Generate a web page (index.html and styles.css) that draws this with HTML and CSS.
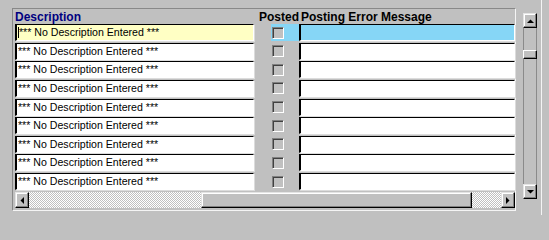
FILE: index.html
```html
<!DOCTYPE html>
<html>
<head>
<meta charset="utf-8">
<link rel="stylesheet" href="styles.css">
</head>
<body>
<div class="win">
  <div class="frame">
    <div class="hdr">
      <div class="h-desc">Description</div>
      <div class="h-posted">Posted</div>
      <div class="h-err">Posting Error Message</div>
    </div>
    <div class="rows">
      <div class="row cur">
        <div class="fld desc"><span class="caret"></span>*** No Description Entered ***</div>
        <div class="pcell"><div class="hl"><span class="chk"></span></div></div>
        <div class="fld err"></div>
      </div>
      <div class="row">
        <div class="fld desc">*** No Description Entered ***</div>
        <div class="pcell"><div class="hl"><span class="chk"></span></div></div>
        <div class="fld err"></div>
      </div>
      <div class="row">
        <div class="fld desc">*** No Description Entered ***</div>
        <div class="pcell"><div class="hl"><span class="chk"></span></div></div>
        <div class="fld err"></div>
      </div>
      <div class="row">
        <div class="fld desc">*** No Description Entered ***</div>
        <div class="pcell"><div class="hl"><span class="chk"></span></div></div>
        <div class="fld err"></div>
      </div>
      <div class="row">
        <div class="fld desc">*** No Description Entered ***</div>
        <div class="pcell"><div class="hl"><span class="chk"></span></div></div>
        <div class="fld err"></div>
      </div>
      <div class="row">
        <div class="fld desc">*** No Description Entered ***</div>
        <div class="pcell"><div class="hl"><span class="chk"></span></div></div>
        <div class="fld err"></div>
      </div>
      <div class="row">
        <div class="fld desc">*** No Description Entered ***</div>
        <div class="pcell"><div class="hl"><span class="chk"></span></div></div>
        <div class="fld err"></div>
      </div>
      <div class="row">
        <div class="fld desc">*** No Description Entered ***</div>
        <div class="pcell"><div class="hl"><span class="chk"></span></div></div>
        <div class="fld err"></div>
      </div>
      <div class="row">
        <div class="fld desc">*** No Description Entered ***</div>
        <div class="pcell"><div class="hl"><span class="chk"></span></div></div>
        <div class="fld err"></div>
      </div>
    </div>
    <div class="hscroll">
      <div class="btn"><svg width="4" height="7" viewBox="0 0 4 7"><polygon points="4,0 4,7 0.5,3.5" fill="#000"/></svg></div>
      <div class="track tl"></div>
      <div class="hthumb"></div>
      <div class="track tr"></div>
      <div class="btn"><svg width="4" height="7" viewBox="0 0 4 7"><polygon points="0,0 0,7 3.5,3.5" fill="#000"/></svg></div>
    </div>
  </div>
  <div class="vscroll">
    <div class="btn vb"><svg width="7" height="4" viewBox="0 0 7 4"><polygon points="0,4 7,4 3.5,0.5" fill="#000"/></svg></div>
    <div class="vtrack">
      <div class="vthumb"></div>
    </div>
    <div class="btn vb"><svg width="7" height="4" viewBox="0 0 7 4"><polygon points="0,0 7,0 3.5,3.5" fill="#000"/></svg></div>
  </div>
  <div class="edge"></div>
</div>
</body>
</html>
```
FILE: styles.css
```css
html, body {
  margin: 0;
  padding: 0;
  background: #c0c0c0;
}
.win {
  width: 549px;
  height: 215px;
  display: flex;
  align-items: flex-start;
  font-family: "Liberation Sans", Arial, sans-serif;
  overflow: hidden;
}
.frame {
  margin-left: 12px;
  margin-top: 8px;
  width: 504px;
  height: 203px;
  box-sizing: border-box;
  border-top: 1px solid #888;
  border-left: 1px solid #888;
  border-right: 1px solid #f4f4f4;
  border-bottom: 1px solid #f4f4f4;
  padding-left: 2px;
  display: flex;
  flex-direction: column;
}
.hdr {
  height: 15px;
  display: grid;
  grid-template-columns: 239px 45px 1fr;
  font-weight: bold;
  font-size: 12px;
  line-height: 14px;
  align-items: end;
}
.h-desc { color: #000080; }
.h-posted { padding-left: 5px; color: #000; white-space: nowrap; }
.h-err { padding-left: 2px; color: #000; white-space: nowrap; }
.rows {
  height: 168px;
  display: grid;
  grid-auto-rows: 18.625px;
}
.row {
  display: grid;
  grid-template-columns: 239px 45px 216px;
  align-items: start;
}
.fld {
  height: 17px;
  box-sizing: border-box;
  background: #fff;
  border-top: 1px solid #000;
  border-left: 2px solid #000;
  border-right: 1px solid #fff;
  border-bottom: 1px solid #fff;
  box-shadow: 1px 1px 0 #dcdcdc;
  font-size: 10.6px;
  line-height: 15px;
  padding-left: 1px;
  white-space: nowrap;
  overflow: hidden;
  color: #000;
}
.row.cur .desc { background: #ffffc4; }
.row.cur .err { background: #86d6f6; }
.caret {
  display: inline-block;
  width: 1px;
  height: 11px;
  background: #000;
  vertical-align: -2px;
  margin-right: 0;
}
.pcell {
  height: 17px;
  display: flex;
  justify-content: flex-end;
}
.hl {
  width: 28px;
  height: 17px;
  display: flex;
  align-items: center;
  padding-left: 1px;
  box-sizing: border-box;
}
.row.cur .hl { background: #86d6f6; }
.chk {
  width: 12px;
  height: 12px;
  box-sizing: border-box;
  background: #c0c0c0;
  border-top: 1px solid #808080;
  border-left: 1px solid #808080;
  border-right: 1px solid #fff;
  border-bottom: 1px solid #fff;
  box-shadow: inset 1px 1px 0 #404040;
}
.hscroll {
  margin-top: 0;
  width: 500px;
  height: 16px;
  display: flex;
}
.btn {
  width: 14px;
  height: 16px;
  box-sizing: border-box;
  background: #c0c0c0;
  border-top: 1px solid #e4e4e4;
  border-left: 1px solid #e4e4e4;
  border-right: 1px solid #000;
  border-bottom: 1px solid #000;
  box-shadow: inset -1px -1px 0 #808080, inset 1px 1px 0 #fff;
  display: flex;
  align-items: center;
  justify-content: center;
  flex: none;
}
.track {
  height: 16px;
  background: repeating-conic-gradient(#c0c0c0 0 25%, #ffffff 0 50%) 0 0 / 2px 2px;
}
.tl { width: 172px; }
.tr { flex: 1; }
.hthumb {
  width: 271px;
  height: 16px;
  box-sizing: border-box;
  background: #c0c0c0;
  border-top: 1px solid #e4e4e4;
  border-left: 1px solid #e4e4e4;
  border-right: 1px solid #000;
  border-bottom: 1px solid #000;
  box-shadow: inset -1px -1px 0 #808080, inset 1px 1px 0 #fff;
}
.vscroll {
  margin-left: 7px;
  margin-top: 13px;
  width: 14px;
  height: 186px;
  display: flex;
  flex-direction: column;
}
.vb {
  width: 14px;
  height: 15px;
}
.vtrack {
  flex: 1;
  box-sizing: border-box;
  border-left: 1px solid #8a8a8a;
  border-right: 1px solid #8a8a8a;
  background: #c0c0c0;
  padding-top: 22px;
}
.vthumb {
  margin-left: -1px;
  width: 14px;
  height: 9px;
  box-sizing: border-box;
  background: #c0c0c0;
  border-top: 1px solid #fff;
  border-left: 1px solid #fff;
  border-right: 1px solid #000;
  border-bottom: 1px solid #000;
  box-shadow: inset -1px -1px 0 #808080;
}
.edge {
  margin-left: 4px;
  width: 1px;
  height: 215px;
  background: #f4f4f4;
}
```
